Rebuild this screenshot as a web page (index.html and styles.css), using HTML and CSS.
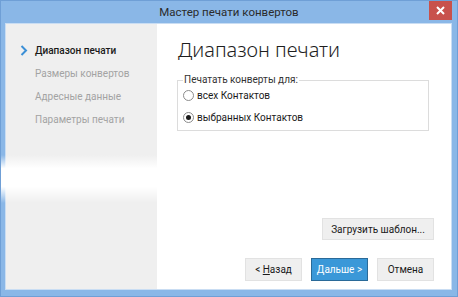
FILE: index.html
```html
<!DOCTYPE html>
<html lang="ru">
<head>
    <meta charset="UTF-8">
    <title>Мастер печати конвертов</title>
    <link rel="stylesheet" href="styles.css">
</head>
<body>
    <div class="window">
        <div class="title-bar">
            <span class="title">Мастер печати конвертов</span>
            <div class="close-btn">
                <svg width="9" height="9" viewBox="0 0 9 9">
                    <path d="M1 1L8 8M8 1L1 8" stroke="#fff" stroke-width="2"/>
                </svg>
            </div>
        </div>

        <div class="client">
            <div class="sidebar">
                <div class="step active">
                    <svg class="chevron" width="8" height="11" viewBox="0 0 8 11">
                        <polyline points="1.5,1 6,5.5 1.5,10" fill="none" stroke="#3b8fd6" stroke-width="2"/>
                    </svg>
                    Диапазон печати
                </div>
                <div class="step">Размеры конвертов</div>
                <div class="step">Адресные данные</div>
                <div class="step">Параметры печати</div>
            </div>

            <div class="content">
                <h1 class="page-title">Диапазон печати</h1>

                <fieldset class="group">
                    <legend class="group-label">Печатать конверты для:</legend>
                    <label class="radio-row first">
                        <span class="radio"></span>
                        всех Контактов
                    </label>
                    <label class="radio-row">
                        <span class="radio checked"></span>
                        выбранных Контактов
                    </label>
                </fieldset>

                <div class="spacer"></div>

                <div class="template-row">
                    <button class="btn btn-template">Загрузить шаблон...</button>
                </div>

                <div class="nav-row">
                    <button class="btn btn-nav">&lt; <u>Н</u>азад</button>
                    <button class="btn btn-nav btn-primary"><u>Д</u>альше &gt;</button>
                    <button class="btn btn-nav">Отмена</button>
                </div>
            </div>
        </div>

        <!-- screen capture glitch band -->
        <div class="glitch"></div>
    </div>
</body>
</html>
```
FILE: styles.css
```css
*{
    padding: 0;
    margin: 0;
    box-sizing: border-box;
}
body{
    background-color: #8ab7e7;
    font-family: Roboto, "Noto Sans", sans-serif;
}

.window{
    position: relative;
    width: 458px;
    height: 297px;
    background-color: #8ab7e7;
    border: 1px solid #6f9fd6;
    display: flex;
    flex-direction: column;
    overflow: hidden;
}

.title-bar{
    height: 22px;
    position: relative;
    display: flex;
    justify-content: center;
    align-items: center;
}

.title{
    font-size: 11.5px;
    color: #2b2b2b;
}

.close-btn{
    position: absolute;
    top: 0;
    right: 5px;
    width: 23px;
    height: 19px;
    background-color: #c8514c;
    display: flex;
    justify-content: center;
    align-items: center;
}

.client{
    flex: 1;
    margin: 0 5px 6px 4px;
    border: 1px solid #c9ddf3;
    display: flex;
    background: #fff;
}

.sidebar{
    width: 151px;
    background-color: #efefef;
    padding-top: 15px;
}

.step{
    height: 23px;
    padding-left: 29px;
    display: flex;
    align-items: center;
    font-size: 10px;
    color: #a3a3a3;
    position: relative;
}

.step.active{
    color: #1a1a1a;
    font-weight: 500;
}

.chevron{
    position: absolute;
    left: 14px;
    top: 6px;
}

.content{
    flex: 1;
    display: flex;
    flex-direction: column;
    padding: 12px 17px 8px 20px;
}

.page-title{
    font-family: "Noto Sans", sans-serif;
    font-size: 20px;
    font-weight: 300;
    color: #1e1e1e;
    line-height: 28px;
    margin-left: 1px;
}

.group{
    width: 252px;
    margin-top: 10px;
    border: 1px solid #dcdcdc;
    padding: 0 6px 2px 5px;
}

.group-label{
    font-size: 10px;
    color: #333;
    padding: 0 1px;
    line-height: 12px;
}

.radio-row{
    height: 22px;
    display: flex;
    align-items: center;
    gap: 3px;
    font-size: 10px;
    color: #1a1a1a;
}

.radio-row.first{
    margin-top: -2px;
}

.radio{
    width: 11px;
    height: 11px;
    border-radius: 50%;
    border: 1px solid #8c8c8c;
    background: #fff;
    display: flex;
    justify-content: center;
    align-items: center;
}

.radio.checked::after{
    content: "";
    width: 5px;
    height: 5px;
    border-radius: 50%;
    background: #1a1a1a;
}

.spacer{
    flex: 1;
}

.template-row,
.nav-row{
    display: flex;
    justify-content: flex-end;
}

.nav-row{
    gap: 9px;
    margin-top: 18px;
}

.btn{
    font-family: inherit;
    font-size: 10px;
    color: #1a1a1a;
    background-color: #efefef;
    border: 1px solid #e2e2e2;
    height: 23px;
}

.btn-template{
    width: 112px;
    height: 22px;
}

.btn-nav{
    width: 57px;
}

.btn-primary{
    background-color: #3a98d8;
    border: 1px solid #2a6a98;
    color: #fff;
}

.glitch{
    position: absolute;
    left: -1px;
    top: 154px;
    width: 160px;
    height: 48px;
    background: linear-gradient(to bottom, rgba(255,255,255,0) 0%, #fff 28%, #fff 66%, rgba(255,255,255,0) 100%);
}
```
